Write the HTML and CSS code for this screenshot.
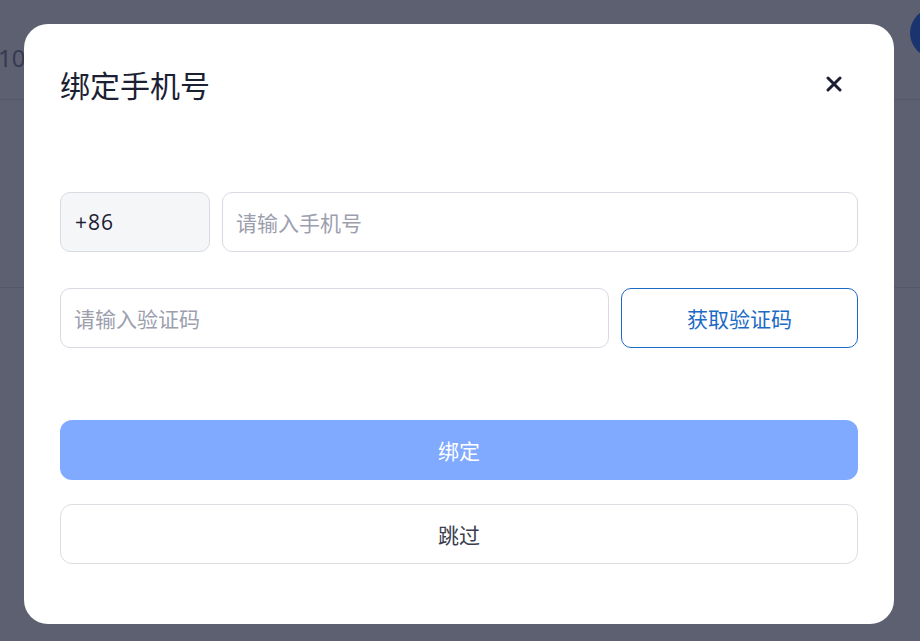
FILE: index.html
```html
<!DOCTYPE html>
<html lang="zh-CN">
<head>
<meta charset="utf-8">
<title>绑定手机号</title>
<link rel="stylesheet" href="styles.css">
</head>
<body>
<div class="page">
  <header class="topbar">
    <span class="count">10</span>
    <span class="avatar"></span>
  </header>
  <section class="band"></section>
  <section class="band tall"></section>
</div>

<div class="overlay">
  <div class="modal">
    <div class="modal-head">
      <h2 class="title">绑定手机号</h2>
      <button class="close" aria-label="关闭">
        <svg width="16" height="16" viewBox="0 0 16 16"><path d="M2 2 L14 14 M14 2 L2 14" stroke="#1c2033" stroke-width="3" stroke-linecap="round"/></svg>
      </button>
    </div>
    <div class="row first">
      <div class="prefix">+86</div>
      <div class="field grow"><span class="ph">请输入手机号</span></div>
    </div>
    <div class="row second">
      <div class="field grow"><span class="ph">请输入验证码</span></div>
      <button class="code-btn">获取验证码</button>
    </div>
    <button class="btn primary">绑定</button>
    <button class="btn ghost">跳过</button>
  </div>
</div>
</body>
</html>
```
FILE: styles.css
```css
* { box-sizing: border-box; }
html, body { margin: 0; padding: 0; }
body {
  width: 920px;
  height: 641px;
  overflow: hidden;
  background: #ffffff;
  font-family: "Noto Sans CJK SC", "Noto Sans", sans-serif;
  position: relative;
}
.page { width: 920px; }
.topbar {
  height: 100px;
  border-bottom: 1px solid #e2e4ea;
  display: flex;
  align-items: flex-start;
  justify-content: space-between;
}
.count {
  margin-top: 41px;
  margin-left: -2px;
  font-size: 24px;
  line-height: 34px;
  color: #7d8099;
  font-family: "Noto Sans", sans-serif;
}
.avatar {
  width: 50px;
  height: 50px;
  border-radius: 50%;
  background: #1f6bff;
  margin-top: 8px;
  margin-right: -40px;
}
.band {
  height: 188px;
  border-bottom: 1px solid #e2e4ea;
}
.band.tall { height: 350px; border-bottom: none; }

.overlay {
  position: absolute;
  inset: 0;
  background: rgba(24, 28, 51, 0.7);
  padding: 24px;
}
.modal {
  width: 870px;
  height: 600px;
  background: #ffffff;
  border-radius: 24px;
  padding: 0 36px;
  display: flex;
  flex-direction: column;
}
.modal-head {
  height: 120px;
  display: flex;
  align-items: center;
  justify-content: space-between;
}
.title {
  margin: 0;
  margin-top: -1px;
  font-size: 30px;
  font-weight: 400;
  color: #1c2033;
}
.close {
  width: 40px;
  height: 40px;
  border: none;
  background: transparent;
  padding: 0;
  margin-right: 4px;
  display: flex;
  align-items: center;
  justify-content: center;
}
.row {
  display: flex;
  gap: 12px;
  height: 60px;
}
.row.first { margin-top: 48px; }
.row.second { margin-top: 36px; }
.prefix {
  width: 150px;
  background: #f5f6f8;
  border: 1px solid #d9dbe2;
  border-radius: 10px;
  display: flex;
  align-items: center;
  padding-left: 14px;
  font-family: "Open Sans", "Noto Sans", sans-serif;
  font-size: 21px;
  letter-spacing: 1px;
  color: #1c2033;
}
.field {
  border: 1px solid #d9dbe2;
  border-radius: 10px;
  display: flex;
  align-items: center;
  padding-left: 13px;
}
.grow { flex: 1; }
.ph {
  font-size: 21px;
  color: #9ca0ae;
}
.code-btn {
  width: 237px;
  border: 1px solid #1d6ac6;
  border-radius: 10px;
  background: #ffffff;
  color: #1d6ac6;
  font-size: 21px;
  font-family: inherit;
}
.btn {
  height: 60px;
  border-radius: 12px;
  font-size: 21px;
  font-family: inherit;
  width: 100%;
}
.btn.primary {
  margin-top: 72px;
  background: #80aaff;
  border: none;
  color: #ffffff;
}
.btn.ghost {
  margin-top: 24px;
  background: #ffffff;
  border: 1px solid #dcdde2;
  color: #3a3d4f;
}
```
